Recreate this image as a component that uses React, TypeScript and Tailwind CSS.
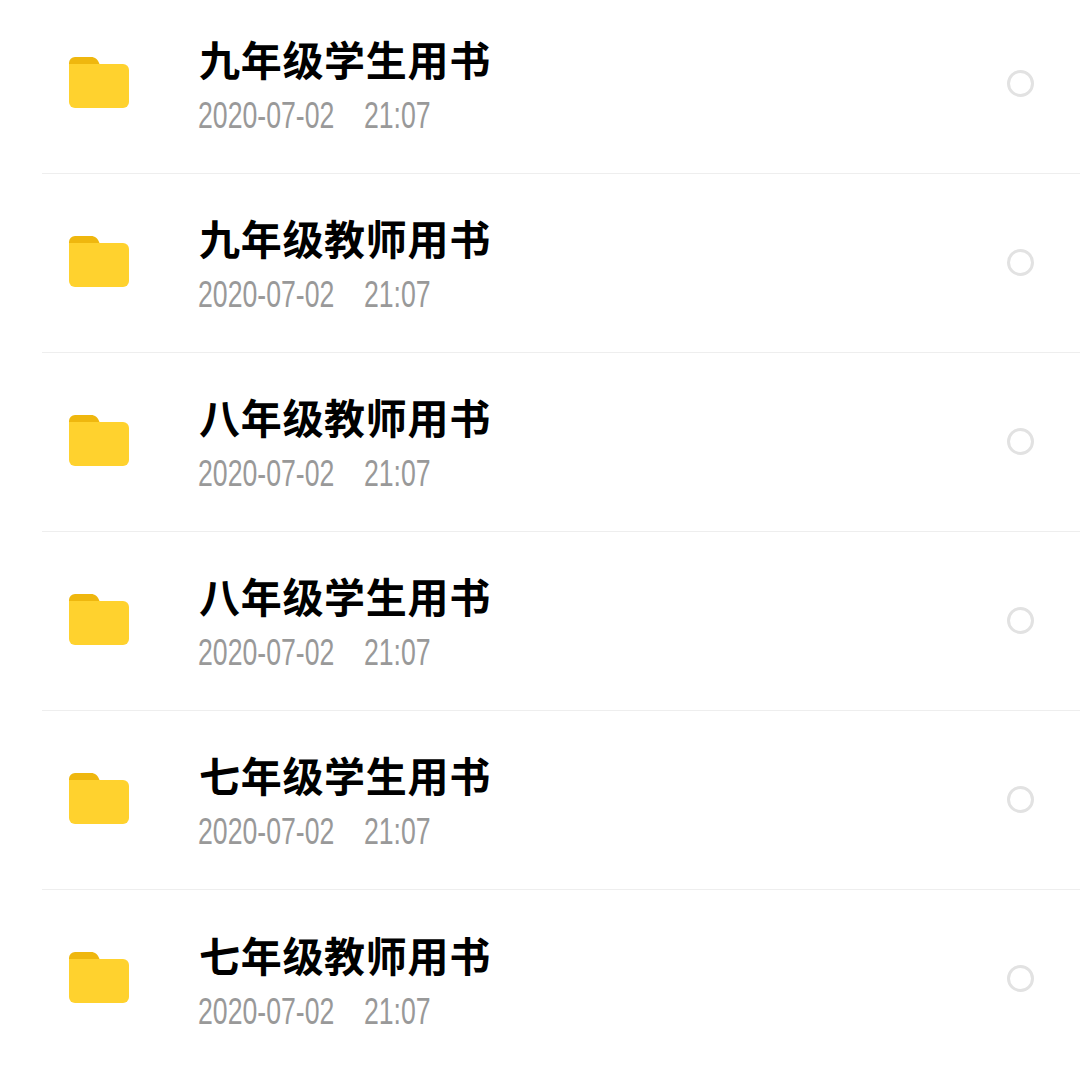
const rows = ["九年级学生用书", "九年级教师用书", "八年级教师用书", "八年级学生用书", "七年级学生用书", "七年级教师用书"];

function Folder() {
  return (
    <svg width="60" height="51" viewBox="0 0 60 51" className="block">
      <path d="M0 6a6 6 0 0 1 6-6h16c4 0 7 2.500 8.500 7H30v3H0z" fill="#efb70e" />
      <path d="M0 7h54a6 6 0 0 1 6 6v32a6 6 0 0 1-6 6H6a6 6 0 0 1-6-6z" fill="#ffd22e" />
    </svg>
  );
}

export default function App() {
  return (
    <div className="h-[1083px] overflow-hidden bg-white pl-[42px] font-['Liberation_Sans','Noto_Sans_CJK_SC',sans-serif]">
      <div className="-mt-[5px]">
        {rows.map((title, i) => (
          <div key={i} className={`flex h-[179px] items-center pr-[46px] ${i < rows.length - 1 ? "border-b border-[#eeeeee]" : ""}`}>
            <div className="ml-[27px] -mt-[4px] w-[129px] shrink-0">
              <Folder />
            </div>
            <div className="mt-[10px] flex-1">
              <div className="ml-[1px] text-[41px] leading-[50px] tracking-[0.7px] font-bold text-black">{title}</div>
              <div className="mt-[4px] w-max origin-left scale-x-[0.74] whitespace-pre text-[36px] leading-[50px] text-[#999999]">
                {"2020-07-02    21:07"}
              </div>
            </div>
            <div className="-mt-[2px] h-[27px] w-[27px] shrink-0 rounded-full border-[3px] border-[#e2e2e2]" />
          </div>
        ))}
      </div>
    </div>
  );
}
